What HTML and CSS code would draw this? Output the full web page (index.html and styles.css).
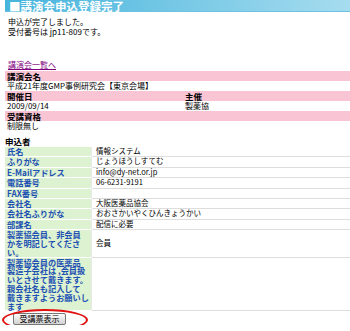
FILE: index.html
```html
<!DOCTYPE html>
<html lang="ja">
<head>
  <meta charset="UTF-8" />
  <title>講演会申込登録完了</title>
  <link rel="stylesheet" href="styles.css">
</head>
<body>
  <div class="titulo">■講演会申込登録完了</div>
  <p class="mensaje">申込が完了しました。<br>受付番号は jp11-809です。</p>
  <p class="volver"><a href="#">講演会一覧へ</a></p>

  <table class="evento">
    <tr><th colspan="2">講演会名</th></tr>
    <tr><td colspan="2">平成21年度GMP事例研究会【東京会場】</td></tr>
    <tr><th class="col1">開催日</th><th>主催</th></tr>
    <tr><td>2009/09/14</td><td>製薬協</td></tr>
    <tr><th colspan="2">受講資格</th></tr>
    <tr><td colspan="2">制限無し</td></tr>
  </table>

  <h3 class="subtitulo">申込者</h3>
  <table class="datos">
    <tr><th>氏名</th><td>情報システム</td></tr>
    <tr><th>ふりがな</th><td>じょうほうしすてむ</td></tr>
    <tr><th>E-Mailアドレス</th><td>info@dy-net.or.jp</td></tr>
    <tr><th>電話番号</th><td>06-6231-9191</td></tr>
    <tr><th>FAX番号</th><td></td></tr>
    <tr><th>会社名</th><td>大阪医薬品協会</td></tr>
    <tr><th>会社名ふりがな</th><td>おおさかいやくひんきょうかい</td></tr>
    <tr><th>部課名</th><td>配信に必要</td></tr>
    <tr><th>製薬協会員、非会員<br>かを明記してくださ<br>い。</th><td class="medio">会員</td></tr>
    <tr><th>製薬協会員の医薬品<br>製造子会社は ,会員扱<br>いとさせて戴きます。<br>親会社名も記入して<br>戴きますようお願いし<br>ます</th><td></td></tr>
  </table>

  <div class="acciones">
    <button type="button">受講票表示</button>
    <span class="marca"></span>
  </div>
</body>
</html>
```

FILE: styles.css
```css
body { margin: 0; padding: 0 0 0 5px; font-family: "Noto Sans CJK JP", sans-serif; font-size: 8px; line-height: 10px; color: #000; background: #fff; overflow: hidden; }
.titulo { height: 12px; line-height: 12px; padding-left: 4px; font-size: 11.5px; font-weight: bold; color: #fff; background: linear-gradient(to right, #46b4dc, #a6dcef); border-bottom: 1px solid #6cc2e2; box-sizing: border-box; }
.mensaje { margin: 5px 0 0; padding-left: 3px; }
.volver { margin: 23px 0 0; padding-left: 3px; }
.volver a { color: #800080; }
.evento { width: 100%; border-collapse: collapse; margin-top: 1px; }
.evento th { background: #f9c4d4; text-align: left; font-weight: bold; font-size: 8.5px; height: 10px; padding: 0 2px; line-height: 10px; }
.evento td { height: 10px; padding: 0 2px; line-height: 10px; }
.evento .col1 { width: 174px; }
.subtitulo { margin: 5px 0 0; font-size: 8.5px; line-height: 11px; }
.datos { width: 100%; border-collapse: collapse; }
.datos th { width: 84px; padding: 0 0 0 2px; background: #dcf2d0; color: #1e50b4; text-align: left; vertical-align: top; font-size: 8.2px; line-height: 8.8px; height: 9.4px; border-bottom: 1px solid #fff; }
.datos td { padding: 0 4px; font-size: 7.5px; line-height: 8.8px; border-bottom: 1px solid #ddd; border-left: 1px solid #e8e8e8; vertical-align: top; }
.datos .medio { vertical-align: middle; }
.acciones { position: relative; padding: 2px 0 0 8px; }
.acciones button { width: 53px; height: 12px; padding: 0; font-family: inherit; font-size: 8px; line-height: 10px; border: 1px solid #777; border-radius: 2px; background: linear-gradient(#fbfbfb, #d2d2d2); color: #000; }
.marca { position: absolute; left: -3px; top: -2px; width: 82px; height: 18px; border: 2px solid #e01010; border-radius: 50%; }
```
